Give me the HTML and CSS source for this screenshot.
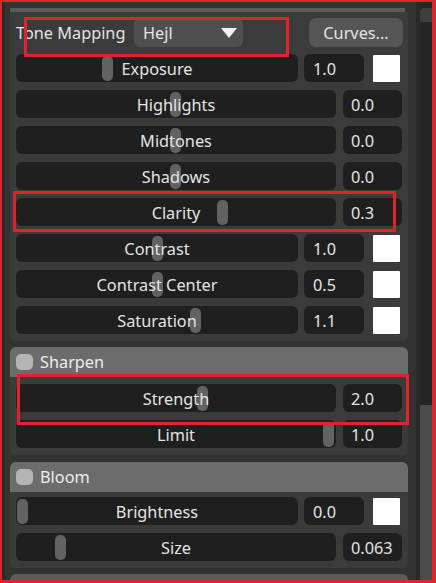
FILE: index.html
```html
<!DOCTYPE html>
<html>
<head>
<meta charset="utf-8">
<link rel="stylesheet" href="styles.css">
</head>
<body>
<div class="app">
  <div class="panel">
    <div class="topstrip"></div>
    <div class="group">
      <div class="tone-row">
        <span class="tone-label">Tone Mapping</span>
        <div class="combo"><span>Hejl</span><svg class="arrow" width="16" height="10" viewBox="0 0 16 10"><polygon points="0,0 16,0 8,10" fill="#f2f2f2"/></svg></div>
        <div class="btn">Curves...</div>
      </div>
      <div class="row a"><div class="slider"><div class="thumb" style="left:86px"></div><span class="lbl">Exposure</span></div><div class="val">1.0</div><div class="swatch"></div></div>
      <div class="row b"><div class="slider"><div class="thumb" style="left:154px"></div><span class="lbl">Highlights</span></div><div class="val">0.0</div></div>
      <div class="row b"><div class="slider"><div class="thumb" style="left:154px"></div><span class="lbl">Midtones</span></div><div class="val">0.0</div></div>
      <div class="row b"><div class="slider"><div class="thumb" style="left:154px"></div><span class="lbl">Shadows</span></div><div class="val">0.0</div></div>
      <div class="row b"><div class="slider"><div class="thumb" style="left:201px"></div><span class="lbl">Clarity</span></div><div class="val">0.3</div></div>
      <div class="row a"><div class="slider"><div class="thumb" style="left:136px"></div><span class="lbl">Contrast</span></div><div class="val">1.0</div><div class="swatch"></div></div>
      <div class="row a"><div class="slider"><div class="thumb" style="left:136px"></div><span class="lbl">Contrast Center</span></div><div class="val">0.5</div><div class="swatch"></div></div>
      <div class="row a"><div class="slider"><div class="thumb" style="left:174px"></div><span class="lbl">Saturation</span></div><div class="val">1.1</div><div class="swatch"></div></div>
    </div>
    <div class="section">
      <div class="sec-head"><span class="check"></span><span>Sharpen</span></div>
      <div class="sec-body">
        <div class="row b"><div class="slider"><div class="thumb" style="left:181px"></div><span class="lbl">Strength</span></div><div class="val">2.0</div></div>
        <div class="row b"><div class="slider"><div class="thumb" style="left:307px"></div><span class="lbl">Limit</span></div><div class="val">1.0</div></div>
      </div>
    </div>
    <div class="section bloom">
      <div class="sec-head"><span class="check"></span><span>Bloom</span></div>
      <div class="sec-body">
        <div class="row a"><div class="slider"><div class="thumb" style="left:1px"></div><span class="lbl">Brightness</span></div><div class="val">0.0</div><div class="swatch"></div></div>
        <div class="row b"><div class="slider"><div class="thumb" style="left:39px"></div><span class="lbl">Size</span></div><div class="val">0.063</div></div>
      </div>
    </div>
    <div class="next-head"></div>
  </div>
  <div class="gutter"></div>
  <div class="scrollbar"><div class="sb-top"></div><div class="sb-thumb"></div></div>

  <div class="mark mark-frame"></div>
  <div class="mark mark-tone"></div>
  <div class="mark mark-clarity"></div>
  <div class="mark mark-strength"></div>
</div>
</body>
</html>
```

FILE: styles.css
```css
html, body {
  margin: 0;
  padding: 0;
  background: #2c2c2c;
}
.app {
  position: relative;
  width: 436px;
  height: 583px;
  overflow: hidden;
  display: flex;
  background: #2c2c2c;
  font-family: "Noto Sans", "Open Sans", sans-serif;
  font-size: 16.3px;
  color: #e4e4e4;
}
.panel {
  width: 413px;
  box-sizing: border-box;
  padding: 8px 5px 0 5px;
  background: #333333;
  border-left: 5px solid #2b2b2b;
  display: flex;
  flex-direction: column;
}
.topstrip {
  height: 5px;
  margin-right: 3px;
  background: #5b5b5b;
}
.group {
  background: #3b3b3b;
  padding: 6px 6px 7px 6px;
  border-radius: 0 0 6px 6px;
  display: flex;
  flex-direction: column;
  gap: 8px;
}
.tone-row {
  display: flex;
  align-items: center;
  height: 29px;
  margin-bottom: -1px;
}
.tone-label {
  width: 111px;
  white-space: nowrap;
}
.combo {
  margin-left: 7px;
  width: 109px;
  height: 29px;
  box-sizing: border-box;
  background: #4f4f4f;
  border-radius: 6px;
  display: flex;
  align-items: center;
  justify-content: space-between;
  padding: 0 6px 0 9px;
}
.btn {
  margin-left: auto;
  margin-right: -1px;
  width: 94px;
  height: 29px;
  background: #565656;
  border-radius: 7px;
  display: flex;
  align-items: center;
  justify-content: center;
}
.row {
  display: flex;
  align-items: center;
  height: 28px;
}
.slider {
  position: relative;
  flex: 1;
  height: 28px;
  background: #1f1f1f;
  border-radius: 6px;
  display: flex;
  align-items: center;
  justify-content: center;
}
.thumb {
  position: absolute;
  top: 2px;
  width: 11px;
  height: 25px;
  border-radius: 5px;
  background: #626262;
}
.lbl {
  position: relative;
  white-space: nowrap;
  padding-top: 1px;
}
.val {
  height: 28px;
  box-sizing: border-box;
  background: #1f1f1f;
  border-radius: 6px;
  display: flex;
  align-items: center;
  padding-left: 9px;
  padding-top: 1px;
}
.row.a .val {
  width: 60px;
  margin-left: 6px;
}
.row.b .val {
  width: 59px;
  margin-left: 7px;
  padding-left: 8px;
}
.swatch {
  width: 27px;
  height: 27px;
  margin-left: 9px;
  margin-right: 2px;
  background: #ffffff;
  border-radius: 1px;
}
.section {
  margin-top: 6px;
  background: #3b3b3b;
  border-radius: 6px;
}
.bloom { margin-top: 7px; }
.sec-head {
  height: 30px;
  background: #6c6c6c;
  border-radius: 6px 6px 0 0;
  display: flex;
  align-items: center;
  padding-left: 6px;
  gap: 7px;
  color: #ececec;
}
.check {
  width: 17px;
  height: 16px;
  border-radius: 5px;
  background: #b4b4b4;
}
.sec-body {
  padding: 7px 6px 7px 6px;
  display: flex;
  flex-direction: column;
  gap: 8px;
}
.bloom .sec-body { padding-top: 5px; }
.next-head {
  margin-top: 6px;
  height: 10px;
  background: #5b5b5b;
  border-radius: 6px 6px 0 0;
}
.gutter {
  width: 7px;
  background: linear-gradient(to right, #333333 0 3px, #292929 3px 7px);
}
.scrollbar {
  width: 16px;
  background: #262626;
  display: flex;
  flex-direction: column;
  padding-top: 8px;
  box-sizing: border-box;
}
.sb-top {
  width: 12px;
  height: 14px;
  background: #3e3e3e;
  border-radius: 4px 0 0 0;
}
.sb-thumb {
  width: 12px;
  margin-top: 383px;
  flex: 1;
  background: #4c4c4c;
}
.mark {
  position: absolute;
  box-sizing: border-box;
  border: 3px solid #e0242c;
  pointer-events: none;
}
.mark-frame {
  left: 0;
  top: 0;
  width: 436px;
  height: 583px;
  border-width: 2px 4px 3px 2px;
}
.mark-tone {
  left: 24px;
  top: 17px;
  width: 265px;
  height: 40px;
}
.mark-clarity {
  left: 13px;
  top: 191px;
  width: 383px;
  height: 41px;
}
.mark-strength {
  left: 17px;
  top: 374px;
  width: 392px;
  height: 51px;
}
```
